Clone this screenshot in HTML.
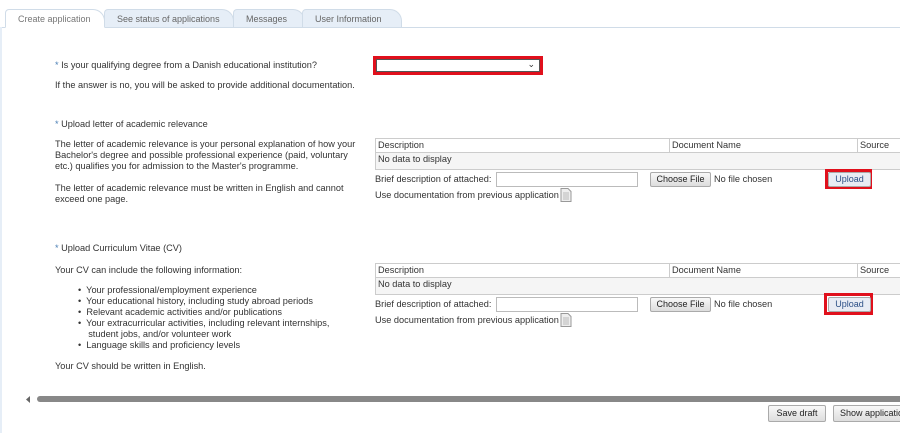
<!DOCTYPE html>
<html><head><style>
body{margin:0;width:900px;height:433px;overflow:hidden;background:#fff;font-family:"Liberation Sans",sans-serif;font-size:9.2px;color:#333;position:relative}
.a{position:absolute;white-space:nowrap}
.tab{position:absolute;top:9px;height:18px;background:#e6eef7;border:1px solid #d0dce8;border-bottom:none;border-radius:4px 12px 0 0;color:#666;font-size:9px;line-height:18px;padding-left:12px;box-sizing:border-box}
.st{color:#4a7fb5}
.tbl{position:absolute;left:375px;width:530px;border:1px solid #ccc;background:#f5f5f5}
.th{height:13px;border-bottom:1px solid #ccc;background:#fff;position:relative}
.th span{position:absolute;top:1px}
.btn{position:absolute;border:1px solid #aaa;background:linear-gradient(#f8f8f8,#ddd);border-radius:2px;text-align:center;line-height:13px;font-size:9px;color:#222}
.red{position:absolute;border:3px solid #e0101c;box-sizing:border-box}
</style></head><body>
<div style="position:absolute;left:0;top:27px;width:900px;border-top:1px solid #d0dce8"></div>
<div style="position:absolute;left:0;top:27px;width:2px;height:406px;background:#e6eef7"></div>
<div class="tab" style="left:5px;width:100px;background:#fff;color:#777;z-index:2;border-bottom:1px solid #fff;height:19px">Create application</div>
<div class="tab" style="left:104px;width:130px">See status of applications</div>
<div class="tab" style="left:233px;width:72px">Messages</div>
<div class="tab" style="left:302px;width:100px">User Information</div>

<div class="a" style="left:55px;top:60px"><span class="st">*</span> Is your qualifying degree from a Danish educational institution?</div>
<div class="a" style="left:55px;top:80px">If the answer is no, you will be asked to provide additional documentation.</div>
<div class="red" style="left:373px;top:56px;width:170px;height:19px"><div style="position:absolute;left:0;top:0;right:0;bottom:0;border:1px solid #555;background:#fff"></div><div class="a" style="right:5px;top:0px;font-size:9px">&#8964;</div></div>

<div class="a" style="left:55px;top:119px"><span class="st">*</span> Upload letter of academic relevance</div>
<div class="a" style="left:55px;top:139px;line-height:11px">The letter of academic relevance is your personal explanation of how your<br>Bachelor's degree and possible professional experience (paid, voluntary<br>etc.) qualifies you for admission to the Master's programme.<br><br style="line-height:9px">The letter of academic relevance must be written in English and cannot<br>exceed one page.</div>

<div class="tbl" style="top:138px;height:30px"><div class="th"><span style="left:2px">Description</span><span style="left:293px;border-left:1px solid #ccc;padding-left:2px;height:13px;top:0;line-height:13px">Document Name</span><span style="left:481px;border-left:1px solid #ccc;padding-left:2px;height:13px;top:0;line-height:13px">Source</span></div><div class="a" style="left:2px;top:15px">No data to display</div></div>
<div class="a" style="left:375px;top:174px">Brief description of attached:</div>
<div style="position:absolute;left:496px;top:172px;width:140px;height:13px;border:1px solid #bbb"></div>
<div class="btn" style="left:650px;top:172px;width:59px">Choose File</div>
<div class="a" style="left:714px;top:174px">No file chosen</div>
<div class="red" style="left:825px;top:169px;width:47px;height:20px"></div>
<div class="btn" style="left:828px;top:172px;width:41px;color:#2b4f86;background:#e8ecf4">Upload</div>
<div class="a" style="left:375px;top:190px">Use documentation from previous application</div>
<svg class="a" style="left:560px;top:188px" width="12" height="14"><path d="M1 .5h7l3 3v10H1z" fill="#eee" stroke="#999"/><path d="M3 5h6M3 7h6M3 9h6M3 11h6" stroke="#bbb"/></svg>

<div class="a" style="left:55px;top:243px"><span class="st">*</span> Upload Curriculum Vitae (CV)</div>
<div class="a" style="left:55px;top:265px">Your CV can include the following information:</div>
<div class="a" style="left:78px;top:285px;line-height:11px">&#8226;&nbsp; Your professional/employment experience<br>&#8226;&nbsp; Your educational history, including study abroad periods<br>&#8226;&nbsp; Relevant academic activities and/or publications<br>&#8226;&nbsp; Your extracurricular activities, including relevant internships,<br>&nbsp;&nbsp;&nbsp; student jobs, and/or volunteer work<br>&#8226;&nbsp; Language skills and proficiency levels</div>
<div class="a" style="left:55px;top:361px">Your CV should be written in English.</div>

<div class="tbl" style="top:263px;height:30px"><div class="th"><span style="left:2px">Description</span><span style="left:293px;border-left:1px solid #ccc;padding-left:2px;height:13px;top:0;line-height:13px">Document Name</span><span style="left:481px;border-left:1px solid #ccc;padding-left:2px;height:13px;top:0;line-height:13px">Source</span></div><div class="a" style="left:2px;top:15px">No data to display</div></div>
<div class="a" style="left:375px;top:299px">Brief description of attached:</div>
<div style="position:absolute;left:496px;top:297px;width:140px;height:13px;border:1px solid #bbb"></div>
<div class="btn" style="left:650px;top:297px;width:59px">Choose File</div>
<div class="a" style="left:714px;top:299px">No file chosen</div>
<div class="red" style="left:824px;top:293px;width:49px;height:22px"></div>
<div class="btn" style="left:828px;top:297px;width:41px;color:#2b4f86;background:#e8ecf4">Upload</div>
<div class="a" style="left:375px;top:315px">Use documentation from previous application</div>
<svg class="a" style="left:560px;top:313px" width="12" height="14"><path d="M1 .5h7l3 3v10H1z" fill="#eee" stroke="#999"/><path d="M3 5h6M3 7h6M3 9h6M3 11h6" stroke="#bbb"/></svg>

<svg class="a" style="left:25px;top:396px" width="6" height="7"><path d="M5 0L1 3.5L5 7z" fill="#666"/></svg>
<div style="position:absolute;left:37px;top:396px;width:870px;height:6px;background:#888;border-radius:3px"></div>
<div class="btn" style="left:768px;top:405px;width:56px;height:15px;line-height:15px">Save draft</div>
<div class="btn" style="left:833px;top:405px;width:80px;height:15px;line-height:15px;text-align:left;padding-left:6px">Show application</div>
</body></html>
